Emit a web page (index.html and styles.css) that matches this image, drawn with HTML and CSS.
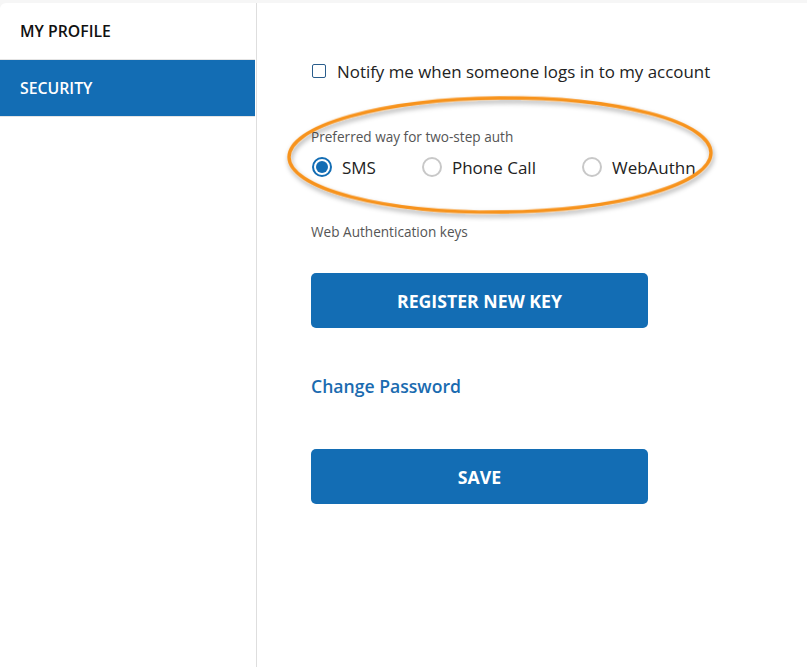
FILE: index.html
```html
<!DOCTYPE html>
<html>
<head>
<meta charset="utf-8">
<link rel="stylesheet" href="styles.css">
</head>
<body>
<div class="page">
  <nav class="sidebar">
    <div class="nav-item">MY PROFILE</div>
    <div class="nav-item active">SECURITY</div>
  </nav>
  <main class="main">
    <label class="notify"><span class="checkbox"></span>Notify me when someone logs in to my account</label>
    <div class="pref-label">Preferred way for two-step auth</div>
    <div class="radios">
      <label class="radio-item"><span class="radio checked"></span>SMS</label>
      <label class="radio-item"><span class="radio"></span>Phone Call</label>
      <label class="radio-item"><span class="radio"></span>WebAuthn</label>
    </div>
    <div class="keys-label">Web Authentication keys</div>
    <button class="btn btn-register">REGISTER NEW KEY</button>
    <a class="change-pw">Change Password</a>
    <button class="btn btn-save">SAVE</button>
    <svg class="annot" width="460" height="150" viewBox="0 0 460 150">
      <defs>
        <filter id="sh" x="-10%" y="-20%" width="120%" height="140%">
          <feDropShadow dx="1" dy="3" stdDeviation="2.5" flood-color="#000" flood-opacity="0.35"/>
        </filter>
      </defs>
      <ellipse cx="230" cy="72" rx="211" ry="57" transform="rotate(-0.6 230 72)" fill="none" stroke="#f7931e" stroke-width="3.4" filter="url(#sh)"/>
    </svg>
  </main>
</div>
</body>
</html>
```

FILE: styles.css
```css
* { box-sizing: border-box; }
html, body { margin: 0; padding: 0; }
body {
  background: #f6f6f6;
  font-family: "Open Sans", "Noto Sans", sans-serif;
  color: #222;
  height: 667px;
  overflow: hidden;
}
.page {
  margin-top: 3px;
  height: 664px;
  background: #fff;
  border-top-left-radius: 6px;
  display: flex;
}
.sidebar {
  width: 257px;
  border-right: 1px solid #dedede;
  padding-right: 1px;
  flex: none;
}
.nav-item {
  height: 57px;
  line-height: 56px;
  padding-left: 20px;
  font-size: 15.8px;
  font-weight: 600;
  color: #111;
  border-bottom: 1px solid #e4e4e4;
}
.nav-item.active {
  background: #136db4;
  color: #fff;
}
.main {
  position: relative;
  flex: 1;
  padding: 56px 0 0 54px;
  display: flex;
  flex-direction: column;
  align-items: flex-start;
}
.notify {
  display: flex;
  align-items: center;
  height: 24px;
  font-size: 16.9px;
  color: #222;
}
.checkbox {
  width: 14px;
  height: 14px;
  border: 1.5px solid #2a5d8c;
  border-radius: 2px;
  margin: 0 11px 0 1px;
}
.pref-label {
  margin-top: 45px;
  font-size: 13.6px;
  line-height: 18px;
  color: #555;
}
.radios {
  margin-top: 9px;
  display: flex;
  height: 24px;
  align-items: center;
}
.radio-item {
  display: flex;
  align-items: center;
  font-size: 17px;
  color: #222;
  margin-right: 45px;
}
.radio {
  width: 20px;
  height: 20px;
  border-radius: 50%;
  border: 2px solid #c8c8c8;
  margin: 0 10px 0 1px;
  position: relative;
}
.radio.checked {
  border-color: #136db4;
}
.radio.checked::after {
  content: "";
  position: absolute;
  left: 2px;
  top: 2px;
  width: 12px;
  height: 12px;
  border-radius: 50%;
  background: #136db4;
}
.keys-label {
  margin-top: 44px;
  font-size: 13.6px;
  line-height: 18px;
  color: #555;
}
.btn {
  width: 337px;
  height: 55px;
  border: none;
  border-radius: 5px;
  background: #136db4;
  color: #fff;
  font-family: "Open Sans", "Noto Sans", sans-serif;
  font-size: 17.7px;
  font-weight: 700;
  padding: 0;
}
.btn-register { margin-top: 32px; }
.change-pw {
  margin-top: 46px;
  font-size: 17.6px;
  line-height: 24px;
  font-weight: 600;
  color: #1a6bb0;
}
.btn-save { margin-top: 51px; }
.annot {
  position: absolute;
  left: 13px;
  top: 80px;
  pointer-events: none;
}
```
